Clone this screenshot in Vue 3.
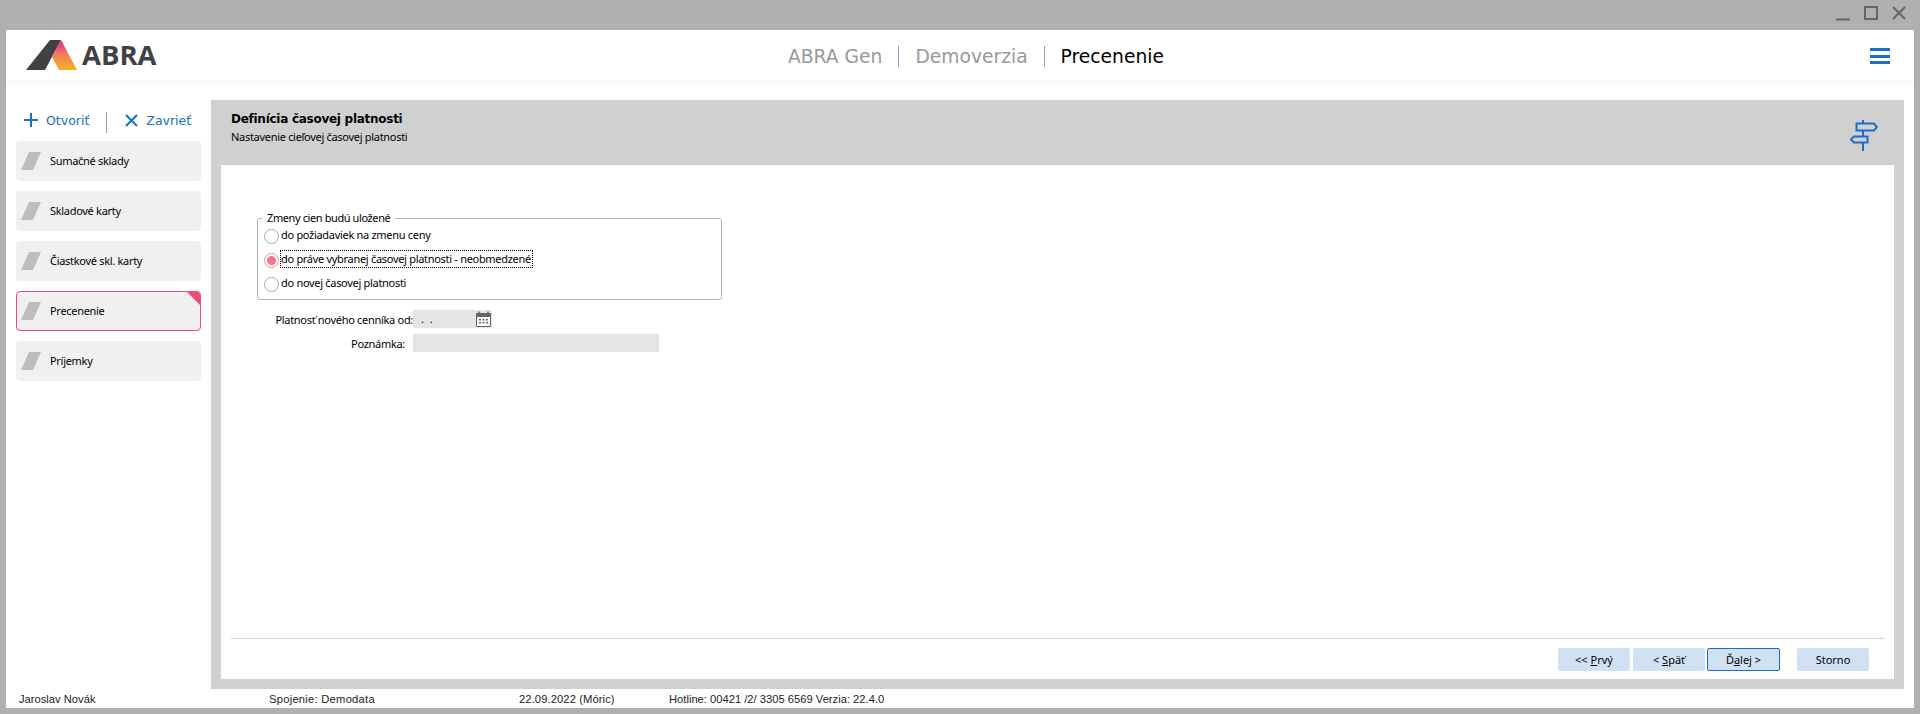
<script setup>
const items = [
  { label: 'Sumačné sklady' },
  { label: 'Skladové karty' },
  { label: 'Čiastkové skl. karty' },
  { label: 'Precenenie', active: true },
  { label: 'Príjemky' },
]
const radios = [
  { label: 'do požiadaviek na zmenu ceny' },
  { label: 'do práve vybranej časovej platnosti - neobmedzené', checked: true },
  { label: 'do novej časovej platnosti' },
]
</script>

<template>
  <div class="window">
    <div class="titlebar">
      <svg class="winctl" width="76" height="20" viewBox="0 0 76 20" fill="none" stroke="#666" stroke-width="2">
        <path d="M4 16.500H18" />
        <rect x="33" y="4" width="12" height="12" />
        <path d="M61 4L73 16M73 4L61 16" />
      </svg>
    </div>
    <div class="client">
      <header class="appbar">
        <div class="logo">
          <svg width="52" height="30" viewBox="0 0 52 30">
            <defs>
              <linearGradient id="abraGrad" x1="0" y1="0" x2="0" y2="1">
                <stop offset="0" stop-color="#e6198c" />
                <stop offset="0.5" stop-color="#f0805a" />
                <stop offset="1" stop-color="#f9b122" />
              </linearGradient>
            </defs>
            <path d="M0 30L24 0H35L19 30Z" fill="#414042" />
            <path d="M35 0L51 30H33L26 17L35 0Z" fill="url(#abraGrad)" />
          </svg>
          <span class="wordmark">ABRA</span>
        </div>
        <div class="crumbs">
          <span class="crumb">ABRA Gen</span>
          <i class="crumb-sep"></i>
          <span class="crumb">Demoverzia</span>
          <i class="crumb-sep"></i>
          <span class="crumb current">Precenenie</span>
        </div>
        <div class="burger"><i></i><i></i><i></i></div>
      </header>
      <div class="work">
        <aside class="side">
          <div class="tools">
            <span class="tool">
              <svg width="14" height="14" viewBox="0 0 14 14" stroke="#1b6ec9" stroke-width="2"><path d="M7 0V14M0 7H14" /></svg>
              Otvoriť
            </span>
            <i class="tool-sep"></i>
            <span class="tool second">
              <svg width="13" height="13" viewBox="0 0 13 13" stroke="#1b6ec9" stroke-width="2"><path d="M1 1L12 12M12 1L1 12" /></svg>
              Zavrieť
            </span>
          </div>
          <nav class="nav">
            <div v-for="it in items" :key="it.label" class="nav-item" :class="{ active: it.active }">
              <svg width="20" height="18" viewBox="0 0 20 18"><path d="M0 18L8 0H20L12 18Z" fill="#bdbdbd" /></svg>
              <span class="nav-text">{{ it.label }}</span>
            </div>
          </nav>
        </aside>
        <main class="panel">
          <div class="panel-head">
            <div>
              <div class="panel-title">Definícia časovej platnosti</div>
              <div class="panel-sub">Nastavenie cieľovej časovej platnosti</div>
            </div>
            <svg class="sign" width="28" height="32" viewBox="0 0 28 32" fill="none" stroke="#1b6ec9" stroke-width="2">
              <path d="M13 0V3M13 11V16M13 23V31" />
              <path d="M6.500 3.500H24L27 7L24 10.500H6.500Z" />
              <path d="M17.500 16.500H4L1 19.500L4 22.500H17.500Z" />
            </svg>
          </div>
          <div class="panel-body">
            <div class="form">
              <fieldset class="group">
                <legend>Zmeny cien budú uložené</legend>
                <label v-for="r in radios" :key="r.label" class="radio" :class="{ checked: r.checked }">
                  <i class="dot"></i>
                  <span class="radio-text">{{ r.label }}</span>
                </label>
              </fieldset>
              <div class="row date-row">
                <span class="lbl">Platnosť nového cenníka od:</span>
                <div class="date">
                  <span class="date-value">. .</span>
                  <svg width="15" height="16" viewBox="0 0 15 16">
                    <path d="M0.500 2.500H14.500V15.500H0.500Z" fill="#fff" stroke="#666" />
                    <path d="M0 2H15V6H0Z" fill="#666" />
                    <path d="M3 0.500V3M12 0.500V3" stroke="#666" stroke-width="1.500" />
                    <path d="M3 8H5V9.500H3ZM6.500 8H8.500V9.500H6.500ZM10 8H12V9.500H10ZM3 11H5V12.500H3ZM6.500 11H8.500V12.500H6.500ZM10 11H12V12.500H10Z" fill="#666" />
                  </svg>
                </div>
              </div>
              <div class="row note-row">
                <span class="lbl note-lbl">Poznámka:</span>
                <div class="note"></div>
              </div>
            </div>
            <div class="actions">
              <button class="btn">&lt;&lt; <u>P</u>rvý</button>
              <button class="btn">&lt; <u>S</u>päť</button>
              <button class="btn default">Ď<u>a</u>lej &gt;</button>
              <button class="btn storno">Storno</button>
            </div>
          </div>
        </main>
      </div>
      <footer class="status">
        <span class="st st-user">Jaroslav Novák</span>
        <span class="st st-conn">Spojenie: Demodata</span>
        <span class="st st-date">22.09.2022 (Móric)</span>
        <span class="st">Hotline: 00421 /2/ 3305 6569 Verzia: 22.4.0</span>
      </footer>
    </div>
  </div>
</template>

<style>
html, body { margin: 0; background: #b0b0b0; overflow: hidden; }
</style>

<style scoped>
.window {
  width: 1920px;
  height: 714px;
  background: #b0b0b0;
  display: flex;
  flex-direction: column;
  padding: 0 6px 6px;
  box-sizing: border-box;
  font-family: "Noto Sans", "Open Sans", sans-serif;
  font-size: 11px;
  letter-spacing: -0.3px;
  color: #000;
}
.titlebar {
  height: 30px;
  flex: none;
  display: flex;
  justify-content: flex-end;
}
.winctl { margin: 3px 6px 0 0; }
.client {
  flex: 1;
  background: #fff;
  display: flex;
  flex-direction: column;
  min-height: 0;
}
.appbar {
  height: 50px;
  flex: none;
  display: flex;
  align-items: center;
  position: relative;
  box-shadow: 0 4px 8px rgba(0, 0, 0, 0.03);
  padding: 0 20px;
}
.logo { display: flex; align-items: center; gap: 4px; }
.wordmark {
  font-family: "Open Sans", sans-serif;
  font-weight: 700;
  font-size: 27.500px;
  line-height: 30px;
  letter-spacing: 0;
  color: #414042;
}
.crumbs {
  position: absolute;
  left: 782px;
  top: 1px;
  height: 50px;
  display: flex;
  align-items: center;
  font-family: "DejaVu Sans", sans-serif;
  font-size: 18.700px;
  letter-spacing: 0;
  color: #999;
}
.crumb-sep { width: 1px; height: 21px; background: #9c9ac0; margin: 0 16px; }
.current { color: #000; }
.burger {
  position: absolute;
  right: 24px;
  top: 18px;
  width: 20px;
  display: flex;
  flex-direction: column;
  gap: 3.500px;
}
.burger i { height: 3px; background: #1b6ec9; display: block; }
.work { flex: 1; display: flex; min-height: 0; padding: 20px 10px 0 0; }
.side { width: 205px; flex: none; box-sizing: border-box; padding-left: 10px; }
.tools {
  height: 41px;
  display: flex;
  align-items: center;
  padding: 0 0 1px 8px;
  color: #1b6ec9;
  font-family: "DejaVu Sans", sans-serif;
  font-size: 12.500px;
  letter-spacing: 0;
  box-sizing: border-box;
}
.tool { display: flex; align-items: center; gap: 8px; }
.tool-sep { width: 1px; height: 21px; background: #9c9ac0; margin: 4px 18px 0 17px; }
.nav { display: flex; flex-direction: column; gap: 10px; }
.nav-item {
  width: 185px;
  height: 40px;
  box-sizing: border-box;
  background: #f0f0f0;
  border-radius: 4px;
  display: flex;
  align-items: center;
  gap: 9px;
  padding: 0 0 0 5px;
  position: relative;
  overflow: hidden;
}
.nav-text { margin-top: -2px; }
.nav-item.active { border: 1px solid #ef4d70; padding-left: 4px; }
.nav-item.active::after {
  content: "";
  position: absolute;
  top: -1px;
  right: -1px;
  border-top: 15px solid #ef4d70;
  border-left: 15px solid transparent;
}
.panel {
  flex: 1;
  display: flex;
  flex-direction: column;
  background: #d0d0d0;
  padding: 0 10px 10px;
  min-width: 0;
}
.panel-head {
  height: 65px;
  flex: none;
  display: flex;
  justify-content: space-between;
  padding: 11px 16px 0 10px;
  box-sizing: border-box;
}
.panel-title {
  font-family: "DejaVu Sans", sans-serif;
  font-weight: 700;
  font-size: 12px;
  letter-spacing: -0.27px;
  line-height: 16px;
}
.panel-sub { font-size: 11px; line-height: 16px; margin-top: 2px; }
.sign { margin: 9px 0 0 0; }
.panel-body {
  flex: 1;
  background: #fff;
  display: flex;
  flex-direction: column;
  padding: 0 10px;
  min-height: 0;
}
.form { flex: 1; padding: 46px 0 0 26px; min-height: 0; }
.group {
  width: 465px;
  height: 89px;
  box-sizing: border-box;
  margin: 0;
  padding: 0 0 0 6px;
  border: 1px solid #b4b4b4;
  border-radius: 3px;
  display: block;
}
.group legend { padding: 0 5px; margin: 0 0 -2px -2px; line-height: 14px; letter-spacing: -0.4px; }
.radio { display: flex; align-items: center; height: 24px; gap: 2px; }
.dot {
  width: 13px;
  height: 13px;
  border-radius: 50%;
  border: 1px solid #aaa;
  background: #fff;
  flex: none;
  box-sizing: content-box;
  margin-top: 2px;
}
.radio-text { line-height: 16px; margin-top: -1px; }
.checked .dot {
  border-color: #f48ba0;
  background: radial-gradient(circle, #f4748f 0 4px, #fff 5px);
}
.checked .radio-text { outline: 1px dotted #000; outline-offset: 0; padding: 0 1px 0 0; }
.row { display: flex; align-items: center; }
.date-row { margin-top: 10px; height: 18px; }
.note-row { margin-top: 6px; height: 18px; }
.lbl { width: 156px; text-align: right; flex: none; }
.note-lbl { width: 148px; margin-right: 8px; }
.date {
  width: 79px;
  height: 18px;
  background: #e5e5e5;
  display: flex;
  align-items: center;
  justify-content: space-between;
  padding: 0 1px 0 8px;
  box-sizing: border-box;
}
.date-value { letter-spacing: 1.500px; margin-top: -2px; }
.note { width: 246px; height: 18px; background: #e5e5e5; }
.actions {
  height: 41px;
  box-sizing: border-box;
  flex: none;
  border-top: 1px solid #d4d4d4;
  display: flex;
  justify-content: flex-end;
  align-items: flex-start;
  padding: 9px 15px 0 0;
  gap: 3px;
}
.btn {
  width: 72px;
  height: 23px;
  border: 0;
  border-radius: 2px;
  background: #d0e1f3;
  font: inherit;
  letter-spacing: 0;
  color: #000;
  padding: 0;
}
.default { border: 1px solid #1b6ec9; width: 73px; margin-left: -1px; }
.storno { margin-left: 14px; }
.status {
  height: 19px;
  flex: none;
  display: flex;
  align-items: center;
  padding-left: 13px;
  font-family: "Liberation Sans", sans-serif;
  font-size: 11.200px;
  letter-spacing: 0;
  color: #222;
}
.st-user { width: 250px; }
.st-conn { width: 250px; letter-spacing: 0.25px; }
.st-date { width: 150px; letter-spacing: 0.1px; }
</style>
